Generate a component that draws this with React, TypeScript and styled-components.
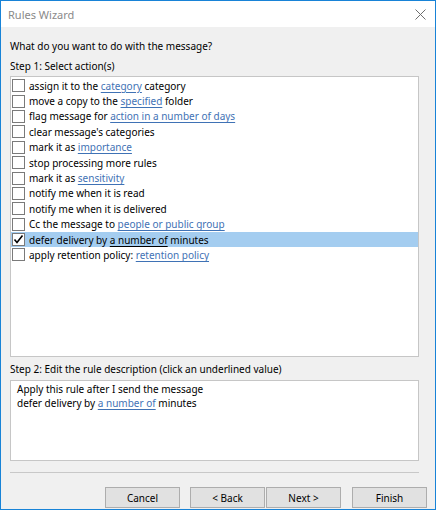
import React from "react";
import styled, { createGlobalStyle } from "styled-components";

const Global = createGlobalStyle`
  html, body { margin: 0; padding: 0; }
  body {
    font-family: "Noto Sans", "Open Sans", "Liberation Sans", sans-serif;
    font-size: 10px;
    color: #000;
    background: #f0f0f0;
  }
`;

const Window = styled.div`
  box-sizing: border-box;
  width: 436px;
  height: 510px;
  border: 1px solid #1883d7;
  display: flex;
  flex-direction: column;
  background: #f0f0f0;
  overflow: hidden;
`;

const TitleBar = styled.div`
  height: 26px;
  flex: none;
  background: #fff;
  display: flex;
  align-items: center;
  justify-content: space-between;
  padding: 0 9px 0 7px;
`;

const Title = styled.span`
  font-size: 11px;
  color: #8a8a8a;
`;

const Content = styled.div`
  display: flex;
  flex-direction: column;
  padding: 0 16px 0 9px;
`;

const Label = styled.div<{ $top: number }>`
  line-height: 16px;
  margin-top: ${(p) => p.$top}px;
  white-space: nowrap;
`;

const ListBox = styled.div`
  margin-top: 2px;
  height: 281px;
  box-sizing: border-box;
  border: 1px solid #c6c6c6;
  background: #fff;
  padding: 1px 0;
  display: flex;
  flex-direction: column;
`;

const Row = styled.div<{ $selected?: boolean }>`
  height: 15.4px;
  flex: none;
  display: flex;
  align-items: center;
  gap: 4px;
  padding-left: 1px;
  white-space: nowrap;
  background: ${(p) => (p.$selected ? "#a4cdf0" : "transparent")};
`;

const Box = styled.span`
  width: 13px;
  height: 13px;
  box-sizing: border-box;
  border: 1px solid #7a7a7a;
  background: #fff;
  flex: none;
  display: flex;
  align-items: center;
  justify-content: center;
`;

const Link = styled.span<{ $plain?: boolean }>`
  color: ${(p) => (p.$plain ? "#000" : "#3f72b5")};
  text-decoration: underline;
  text-underline-offset: 2px;
`;

const DescBox = styled.div`
  margin-top: 3px;
  height: 81px;
  box-sizing: border-box;
  border: 1px solid #c6c6c6;
  background: #fff;
  padding: 1px 6px;
  line-height: 14px;
`;

const Separator = styled.div`
  margin-top: 11px;
  height: 1px;
  background: #c8c8c8;
`;

const Footer = styled.div`
  display: flex;
  justify-content: flex-end;
  margin-top: 14px;
  padding: 0 8px 0 9px;
`;

const Button = styled.button<{ $gap: number }>`
  width: 75px;
  height: 21px;
  margin-left: ${(p) => p.$gap}px;
  box-sizing: border-box;
  border: 1px solid #adadad;
  background: #e1e1e1;
  font: inherit;
  color: #000;
  padding: 0;
`;

type Part = string | { link: string };
const rows: Part[][] = [
  ["assign it to the ", { link: "category" }, " category"],
  ["move a copy to the ", { link: "specified" }, " folder"],
  ["flag message for ", { link: "action in a number of days" }],
  ["clear message's categories"],
  ["mark it as ", { link: "importance" }],
  ["stop processing more rules"],
  ["mark it as ", { link: "sensitivity" }],
  ["notify me when it is read"],
  ["notify me when it is delivered"],
  ["Cc the message to ", { link: "people or public group" }],
  ["defer delivery by ", { link: "a number of" }, " minutes"],
  ["apply retention policy: ", { link: "retention policy" }],
];

const SELECTED = 10;

export default function App() {
  return (
    <>
      <Global />
      <Window>
        <TitleBar>
          <Title>Rules Wizard</Title>
          <svg width="11" height="11" viewBox="0 0 11 11">
            <path d="M0.5 0.5 L10.5 10.5 M10.5 0.5 L0.5 10.5" stroke="#6e6e6e" strokeWidth="1" />
          </svg>
        </TitleBar>
        <Content>
          <Label $top={11}>What do you want to do with the message?</Label>
          <Label $top={4}>Step 1: Select action(s)</Label>
          <ListBox>
            {rows.map((parts, i) => (
              <Row key={i} $selected={i === SELECTED}>
                <Box>
                  {i === SELECTED && (
                    <svg width="11" height="11" viewBox="0 0 11 11">
                      <path d="M1.5 5.5 L4 8.5 L9.5 1.5" fill="none" stroke="#000" strokeWidth="1.6" />
                    </svg>
                  )}
                </Box>
                <span>
                  {parts.map((p, j) =>
                    typeof p === "string" ? (
                      <React.Fragment key={j}>{p}</React.Fragment>
                    ) : (
                      <Link key={j} $plain={i === SELECTED}>
                        {p.link}
                      </Link>
                    )
                  )}
                </span>
              </Row>
            ))}
          </ListBox>
          <Label $top={4}>Step 2: Edit the rule description (click an underlined value)</Label>
          <DescBox>
            <div>Apply this rule after I send the message</div>
            <div>
              defer delivery by <Link>a number of</Link> minutes
            </div>
          </DescBox>
          <Separator />
        </Content>
        <Footer>
          <Button $gap={0}>Cancel</Button>
          <Button $gap={10}>&lt; Back</Button>
          <Button $gap={1}>Next &gt;</Button>
          <Button $gap={11}>Finish</Button>
        </Footer>
      </Window>
    </>
  );
}
